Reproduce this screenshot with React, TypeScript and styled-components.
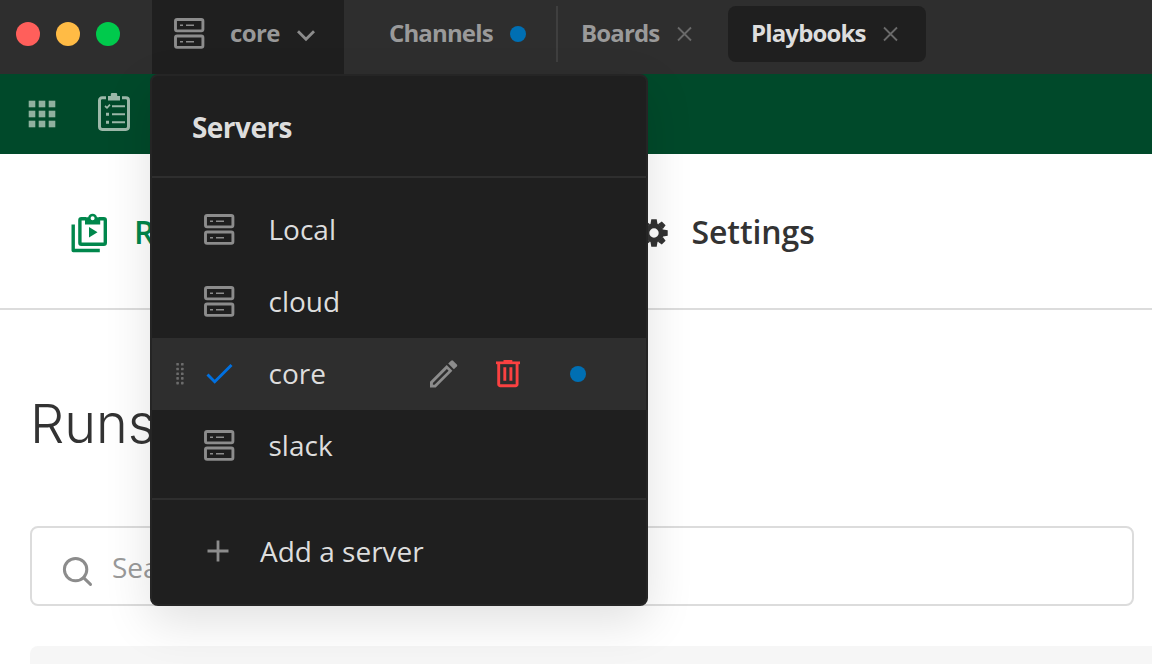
import React from "react";
import styled, { createGlobalStyle } from "styled-components";

const GlobalStyle = createGlobalStyle`
  *, *::before, *::after { box-sizing: border-box; }
  body {
    margin: 0;
    overflow: hidden;
    background: #fff;
    font-family: "Open Sans", sans-serif;
  }
  svg { display: block; flex: none; }
`;

const Window = styled.div`
  position: relative;
  display: flex;
  flex-direction: column;
  width: 1152px;
  height: 664px;
  overflow: hidden;
  background: #fff;
`;

const TitleBar = styled.header`
  display: flex;
  flex: none;
  height: 74px;
  background: #2e2e2e;
`;

const TrafficLights = styled.div`
  display: flex;
  gap: 16px;
  width: 152px;
  padding: 22px 0 0 16px;
`;

const Light = styled.span<{ $color: string }>`
  width: 24px;
  height: 24px;
  border-radius: 50%;
  background: ${(p) => p.$color};
`;

const ServerButton = styled.button`
  display: flex;
  align-items: center;
  width: 192px;
  height: 74px;
  padding: 0 0 8px 22px;
  border: 0;
  background: #1f1f1f;
  color: #989898;
  font: 700 24px/32px "Open Sans", sans-serif;
  letter-spacing: -0.6px;
`;

const ServerButtonLabel = styled.span`
  width: 53px;
  margin: 0 14px 0 25px;
  text-align: left;
`;

const Tabs = styled.nav`
  display: flex;
  padding: 6px 0 0 22px;
`;

const Tab = styled.div<{ $active?: boolean }>`
  display: flex;
  align-items: center;
  height: 56px;
  padding: 0 ${(p) => (p.$active ? 28 : 24)}px 0 24px;
  border-radius: 8px;
  background: ${(p) => (p.$active ? "#1f1f1f" : "transparent")};
  color: ${(p) => (p.$active ? "#dddddd" : "#9a9a9a")};
  font: 700 24px/32px "Open Sans", sans-serif;
  letter-spacing: -0.85px;
`;

const TabLabel = styled.span<{ $width: number }>`
  width: ${(p) => p.$width}px;
  margin: 0 17px 0 -1px;
  padding-bottom: 2px;
  white-space: nowrap;
`;

const TabDivider = styled.span`
  width: 2px;
  height: 56px;
  margin-left: 6px;
  background: #3f3f3f;
`;

const TabSpacer = styled.span`
  width: 12px;
`;

const UnreadDot = styled.span`
  flex: none;
  width: 16px;
  height: 16px;
  border-radius: 50%;
  background: #006fb3;
`;

const ProductBar = styled.div`
  display: flex;
  flex: none;
  gap: 40px;
  height: 80px;
  padding: 19px 0 0 28px;
  background: #00492a;
`;

const PageNav = styled.nav`
  display: flex;
  flex: none;
  align-items: center;
  height: 156px;
  padding-left: 70px;
  border-bottom: 2px solid #dcdcdc;
`;

const NavItem = styled.div<{ $color: string; $width?: number }>`
  display: flex;
  align-items: center;
  width: ${(p) => (p.$width ? `${p.$width}px` : "auto")};
  padding-top: 3px;
  color: ${(p) => p.$color};
  font-size: 32px;
  font-weight: 600;
  line-height: 44px;
  letter-spacing: -0.1px;
`;

const NavLabel = styled.span<{ $gap: number }>`
  margin-left: ${(p) => p.$gap}px;
  padding-bottom: 2px;
`;

const Content = styled.main`
  display: flex;
  flex: 1;
  flex-direction: column;
  padding-left: 30px;
`;

const Heading = styled.h1`
  margin: 82px 0 0 0;
  height: 134px;
  color: #333;
  font: 300 54px/64px Inter, sans-serif;
`;

const SearchBox = styled.div`
  display: flex;
  flex: none;
  align-items: center;
  width: 1104px;
  height: 80px;
  padding: 2px 0 0 30px;
  border: 2px solid #dcdcdc;
  border-radius: 8px;
  color: #9a9a9a;
  font-size: 28px;
  line-height: 40px;
`;

const SearchLabel = styled.span`
  margin-left: 18px;
  padding-bottom: 1px;
`;

const ListHeader = styled.div`
  height: 60px;
  margin-top: 40px;
  border-radius: 8px 0 0 0;
  background: #f6f6f6;
`;

const Menu = styled.section`
  position: absolute;
  top: 74px;
  left: 150px;
  width: 498px;
  height: 532px;
  border: 2px solid #252525;
  border-radius: 8px;
  background: #1f1f1f;
  box-shadow: 0 16px 48px rgba(0, 0, 0, 0.12);
  color: #dddddd;
  font-size: 28px;
  line-height: 40px;
`;

const MenuTitle = styled.h2`
  margin: 0;
  height: 102px;
  padding: 31px 0 0 40px;
  border-bottom: 2px solid #2e2e2e;
  font-size: 28px;
  font-weight: 700;
  line-height: 40px;
  letter-spacing: -0.55px;
`;

const ServerList = styled.ul`
  margin: 0;
  padding: 16px 0;
  border-bottom: 2px solid #2e2e2e;
  list-style: none;
`;

const ServerRow = styled.li<{ $selected?: boolean }>`
  display: flex;
  align-items: center;
  height: 72px;
  padding-bottom: 2px;
  background: ${(p) => (p.$selected ? "#2e2e2e" : "transparent")};
`;

const Grip = styled.span`
  width: 52px;
  padding: 2px 0 0 24px;
`;

const ServerName = styled.span`
  width: 161.5px;
  margin-left: 33.5px;
`;

const RowActions = styled.span`
  display: flex;
  align-items: center;
  padding-top: 2px;
`;

const ActionSlot = styled.span<{ $width: number }>`
  width: ${(p) => p.$width}px;
`;

const AddServer = styled.div`
  display: flex;
  align-items: center;
  gap: 31px;
  height: 72px;
  margin-top: 15px;
  padding-left: 55px;
`;

const ServerIcon = ({ color = "#8c8c8c" }: { color?: string }) => (
  <svg width="31" height="31" viewBox="0 0 31 31" fill="none" stroke={color}>
    <rect x="1.5" y="1.5" width="27.4" height="11.4" rx="1.6" strokeWidth="2.9" />
    <rect x="1.5" y="18" width="27.4" height="11.4" rx="1.6" strokeWidth="2.9" />
    <path d="M6 7.2h3M12 7.2h8M6 23.7h3M12 23.7h8" strokeWidth="1.6" />
  </svg>
);

const CloseIcon = () => (
  <svg width="16" height="16" viewBox="0 0 16 16" stroke="#6a6a6a" strokeWidth="1.8">
    <path d="M2 1.500 15 14.500M15 1.500 2 14.500" />
  </svg>
);

const ChevronIcon = () => (
  <svg width="18" height="18" viewBox="0 0 18 18" fill="none" stroke="#8c8c8c" strokeWidth="2.8">
    <path d="M1 7.200 9 15.200 17 7.200" />
  </svg>
);

const GridIcon = () => (
  <svg width="29" height="42" viewBox="0 0 29 42" fill="#8fb09f">
    {[7.7, 17.7, 27.7].map((y) =>
      [0.7, 10.7, 20.7].map((x) => <rect key={`${x}-${y}`} x={x} y={y} width="6.6" height="6.6" />)
    )}
  </svg>
);

const ChecklistIcon = () => (
  <svg width="34" height="40" viewBox="0 0 34 40" fill="none" stroke="#9cb8a9">
    <path d="M9 4.800H5.100a2.600 2.600 0 0 0-2.600 2.600v26.400a2.600 2.600 0 0 0 2.600 2.600h23.800a2.600 2.600 0 0 0 2.600-2.600V7.400a2.600 2.600 0 0 0-2.600-2.600H25" strokeWidth="3" />
    <path d="M11 7.500V3h2.800V1.300Q13.800 0 15 0h4q1.200 0 1.200 1.300V3H23v4.500z" fill="#9cb8a9" stroke="none" />
    <path d="M15 13.200h13M15 21.200h13M15 29.300h13" strokeWidth="2" />
    <path d="M8 13l2 1.800 3-3.200" strokeWidth="1.700" />
    <path d="M9 21.200h3M9 29.300h3" strokeWidth="3" />
  </svg>
);

const RunsIcon = () => (
  <svg width="38" height="40" viewBox="0 0 38 40" fill="none" stroke="#00874c">
    <path d="M3.200 11.500v26h26.600" strokeWidth="3.400" strokeLinejoin="round" />
    <path d="M16 5.800h-4.600a1.500 1.500 0 0 0-1.500 1.500v22.400a1.500 1.500 0 0 0 1.500 1.500h22.400a1.500 1.500 0 0 0 1.500-1.500V7.300a1.500 1.500 0 0 0-1.500-1.500H29" strokeWidth="3.400" />
    <path fillRule="evenodd" d="M15 11.500V4.300h3.200a4.500 4.500 0 0 1 8.800 0h3.200v7.200zM22.600 3.300a2 2 0 1 0 0 4 2 2 0 0 0 0-4z" fill="#00874c" stroke="none" />
    <path d="M19 14v10.500l8.500-5.250z" fill="#00874c" stroke="none" />
  </svg>
);

const GearIcon = () => (
  <svg width="28" height="28" viewBox="0 0 28 28" fill="#333">
    {[0, 45, 90, 135].map((a) => (
      <path key={a} d="M11.300 0.300h5.400l.8 4.700h-7zM11.300 27.700h5.400l.8-4.700h-7z" transform={`rotate(${a} 14 14)`} />
    ))}
    <circle cx="14" cy="14" r="7.200" fill="none" stroke="#333" strokeWidth="5" />
  </svg>
);

const SearchIcon = () => (
  <svg width="32" height="42" viewBox="0 0 32 42" fill="none" stroke="#8c8c8c" strokeWidth="3">
    <circle cx="13.600" cy="23.600" r="11.200" />
    <path d="M21.500 31.700 28.500 38.400" strokeLinecap="round" />
  </svg>
);

const GripIcon = () => (
  <svg width="10" height="24" viewBox="0 0 10 24" fill="#6c6c6c">
    {[1, 5.700, 10.400, 15.100, 19.800].map((y) =>
      [0.300, 5].map((x) => <rect key={`${x}-${y}`} x={x} y={y} width="2.600" height="2.600" rx="0.600" />)
    )}
  </svg>
);

const CheckIcon = () => (
  <svg width="31" height="26" viewBox="0 0 31 26" fill="none" stroke="#0070e0" strokeWidth="2.900">
    <path d="M3.500 14.500 10.700 21.700 27.500 5" />
  </svg>
);

const PencilIcon = () => (
  <svg width="28" height="28" viewBox="0 0 28 28" fill="#8c8c8c">
    <path fillRule="evenodd" d="M0 27.500V21.800L16.700 5.100l5.700 5.700L5.700 27.500zM2.900 24.800h1.600L18.600 10.700 16.900 9 2.900 23z" />
    <path d="M18.200 3.600 21.100.7q1-.9 2 0l3.700 3.700q.9 1 0 2L23.900 9.300z" />
  </svg>
);

const TrashIcon = () => (
  <svg width="24" height="28" viewBox="0 0 24 28" fill="none" stroke="#fb4141">
    <path d="M0 2.800h24" strokeWidth="2.700" />
    <path d="M7.500 1.300h8.800" strokeWidth="2.600" />
    <path d="M2.700 3v21.200a1.500 1.500 0 0 0 1.500 1.500h15.400a1.500 1.500 0 0 0 1.500-1.500V3" strokeWidth="2.900" />
    <path d="M8.800 7.300v13.500M14.900 7.300v13.500" strokeWidth="2.900" />
  </svg>
);

const PlusIcon = () => (
  <svg width="22" height="22" viewBox="0 0 22 22" stroke="#8c8c8c" strokeWidth="2.800">
    <path d="M11 .5v21M.5 11h21" />
  </svg>
);

const servers = [
  { name: "Local" },
  { name: "cloud" },
  { name: "core", selected: true },
  { name: "slack" },
];

export default function App() {
  return (
    <>
      <GlobalStyle />
      <Window>
        <TitleBar>
          <TrafficLights>
            <Light $color="#ff5f5b" />
            <Light $color="#ffbb45" />
            <Light $color="#00ca4c" />
          </TrafficLights>
          <ServerButton>
            <ServerIcon />
            <ServerButtonLabel>core</ServerButtonLabel>
            <ChevronIcon />
          </ServerButton>
          <Tabs>
            <Tab>
              <TabLabel $width={104}>Channels</TabLabel>
              <UnreadDot />
            </Tab>
            <TabDivider />
            <Tab>
              <TabLabel $width={78}>Boards</TabLabel>
              <CloseIcon />
            </Tab>
            <TabSpacer />
            <Tab $active>
              <TabLabel $width={114}>Playbooks</TabLabel>
              <CloseIcon />
            </Tab>
          </Tabs>
        </TitleBar>
        <ProductBar>
          <GridIcon />
          <ChecklistIcon />
        </ProductBar>
        <PageNav>
          <NavItem $color="#00874c" $width={570}>
            <RunsIcon />
            <NavLabel $gap={26}>Runs</NavLabel>
          </NavItem>
          <NavItem $color="#333">
            <GearIcon />
            <NavLabel $gap={23.5}>Settings</NavLabel>
          </NavItem>
        </PageNav>
        <Content>
          <Heading>Runs</Heading>
          <SearchBox>
            <SearchIcon />
            <SearchLabel>Search</SearchLabel>
          </SearchBox>
          <ListHeader />
        </Content>
        <Menu>
          <MenuTitle>Servers</MenuTitle>
          <ServerList>
            {servers.map((s) => (
              <ServerRow key={s.name} $selected={s.selected}>
                <Grip>{s.selected && <GripIcon />}</Grip>
                {s.selected ? <CheckIcon /> : <ServerIcon />}
                <ServerName>{s.name}</ServerName>
                {s.selected && (
                  <RowActions>
                    <ActionSlot $width={66}>
                      <PencilIcon />
                    </ActionSlot>
                    <ActionSlot $width={74}>
                      <TrashIcon />
                    </ActionSlot>
                    <UnreadDot />
                  </RowActions>
                )}
              </ServerRow>
            ))}
          </ServerList>
          <AddServer>
            <PlusIcon />
            <span>Add a server</span>
          </AddServer>
        </Menu>
      </Window>
    </>
  );
}
